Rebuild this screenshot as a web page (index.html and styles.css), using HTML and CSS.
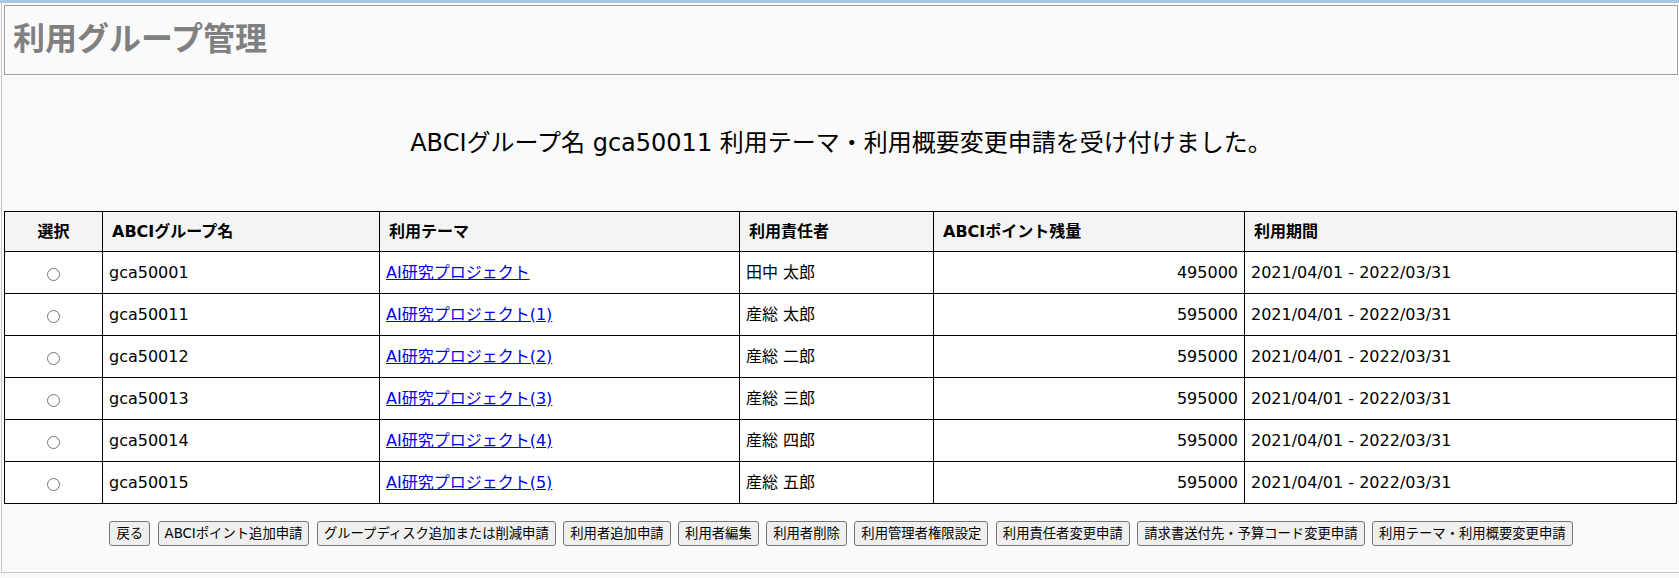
FILE: index.html
```html
<!DOCTYPE html>
<html lang="ja">
<head>
<meta charset="utf-8">
<title>利用グループ管理</title>
<link rel="stylesheet" href="styles.css">
</head>
<body>
<div class="topbar"></div>
<div class="page">
  <header class="title-box">
    <h1 class="title">利用グループ管理</h1>
  </header>
  <p class="message">ABCIグループ名 gca50011 利用テーマ・利用概要変更申請を受け付けました。</p>
  <table class="groups">
    <colgroup>
      <col class="c-sel">
      <col class="c-name">
      <col class="c-theme">
      <col class="c-owner">
      <col class="c-point">
      <col class="c-period">
    </colgroup>
    <thead>
      <tr>
        <th class="center">選択</th>
        <th>ABCIグループ名</th>
        <th>利用テーマ</th>
        <th>利用責任者</th>
        <th>ABCIポイント残量</th>
        <th>利用期間</th>
      </tr>
    </thead>
    <tbody>
      <tr>
        <td class="center"><input type="radio" name="grp"></td>
        <td>gca50001</td>
        <td><a href="#">AI研究プロジェクト</a></td>
        <td>田中 太郎</td>
        <td class="num">495000</td>
        <td>2021/04/01 - 2022/03/31</td>
      </tr>
      <tr>
        <td class="center"><input type="radio" name="grp"></td>
        <td>gca50011</td>
        <td><a href="#">AI研究プロジェクト(1)</a></td>
        <td>産総 太郎</td>
        <td class="num">595000</td>
        <td>2021/04/01 - 2022/03/31</td>
      </tr>
      <tr>
        <td class="center"><input type="radio" name="grp"></td>
        <td>gca50012</td>
        <td><a href="#">AI研究プロジェクト(2)</a></td>
        <td>産総 二郎</td>
        <td class="num">595000</td>
        <td>2021/04/01 - 2022/03/31</td>
      </tr>
      <tr>
        <td class="center"><input type="radio" name="grp"></td>
        <td>gca50013</td>
        <td><a href="#">AI研究プロジェクト(3)</a></td>
        <td>産総 三郎</td>
        <td class="num">595000</td>
        <td>2021/04/01 - 2022/03/31</td>
      </tr>
      <tr>
        <td class="center"><input type="radio" name="grp"></td>
        <td>gca50014</td>
        <td><a href="#">AI研究プロジェクト(4)</a></td>
        <td>産総 四郎</td>
        <td class="num">595000</td>
        <td>2021/04/01 - 2022/03/31</td>
      </tr>
      <tr>
        <td class="center"><input type="radio" name="grp"></td>
        <td>gca50015</td>
        <td><a href="#">AI研究プロジェクト(5)</a></td>
        <td>産総 五郎</td>
        <td class="num">595000</td>
        <td>2021/04/01 - 2022/03/31</td>
      </tr>
    </tbody>
  </table>
  <div class="actions">
    <button class="btn" type="button">戻る</button>
    <button class="btn" type="button">ABCIポイント追加申請</button>
    <button class="btn" type="button">グループディスク追加または削減申請</button>
    <button class="btn" type="button">利用者追加申請</button>
    <button class="btn" type="button">利用者編集</button>
    <button class="btn" type="button">利用者削除</button>
    <button class="btn" type="button">利用管理者権限設定</button>
    <button class="btn" type="button">利用責任者変更申請</button>
    <button class="btn" type="button">請求書送付先・予算コード変更申請</button>
    <button class="btn" type="button">利用テーマ・利用概要変更申請</button>
  </div>
</div>
</body>
</html>
```

FILE: styles.css
```css
html, body {
  margin: 0;
  padding: 0;
}
body {
  background: #fafafa;
  font-family: "DejaVu Sans", "Noto Sans CJK JP", sans-serif;
  font-size: 16px;
  color: #000;
}
.topbar {
  height: 3px;
  background: #abc9e4;
}
.page {
  margin-left: 1px;
  border-left: 1px solid #c8c8c8;
  border-bottom: 1px solid #c8c8c8;
  padding: 2px 1px 26px 2px;
}
.title-box {
  border: 1px solid #a0a0a0;
  background: #fafafa;
  padding: 8px 8px 16px 8px;
}
.title {
  margin: 0;
  font-family: "Noto Sans CJK JP", sans-serif;
  font-size: 32px;
  line-height: 44px;
  font-weight: bold;
  color: #808080;
}
.message {
  margin: 0;
  padding: 51px 0 51px;
  text-align: center;
  font-size: 24px;
  line-height: 34px;
}
.groups {
  width: calc(100% - 1px);
  border-collapse: collapse;
  table-layout: fixed;
  background: #fff;
}
.c-sel { width: 98px; }
.c-name { width: 277px; }
.c-theme { width: 360px; }
.c-owner { width: 194px; }
.c-point { width: 311px; }
.groups th,
.groups td {
  border: 1px solid #000;
  text-align: left;
  white-space: nowrap;
}
.groups th {
  background: #f4f4f4;
  font-weight: bold;
  padding: 8px 9px;
  line-height: 23px;
}
.groups td {
  padding: 9px 6px 8px;
  line-height: 24px;
}
.groups .center {
  text-align: center;
}
.groups .num {
  text-align: right;
}
.groups a {
  color: #0000ee;
  text-decoration: underline;
}
.groups input[type="radio"] {
  margin: 2px 0 0;
  width: 13px;
  height: 13px;
  vertical-align: middle;
}
.actions {
  display: flex;
  justify-content: center;
  gap: 7.5px;
  margin-top: 17px;
}
.btn {
  font-family: "DejaVu Sans", "Noto Sans CJK JP", sans-serif;
  font-size: 13.333px;
  line-height: 21px;
  padding: 1px 6px;
  border: 1px solid #767676;
  border-radius: 3px;
  background: #efefef;
  color: #000;
  white-space: nowrap;
}
```
